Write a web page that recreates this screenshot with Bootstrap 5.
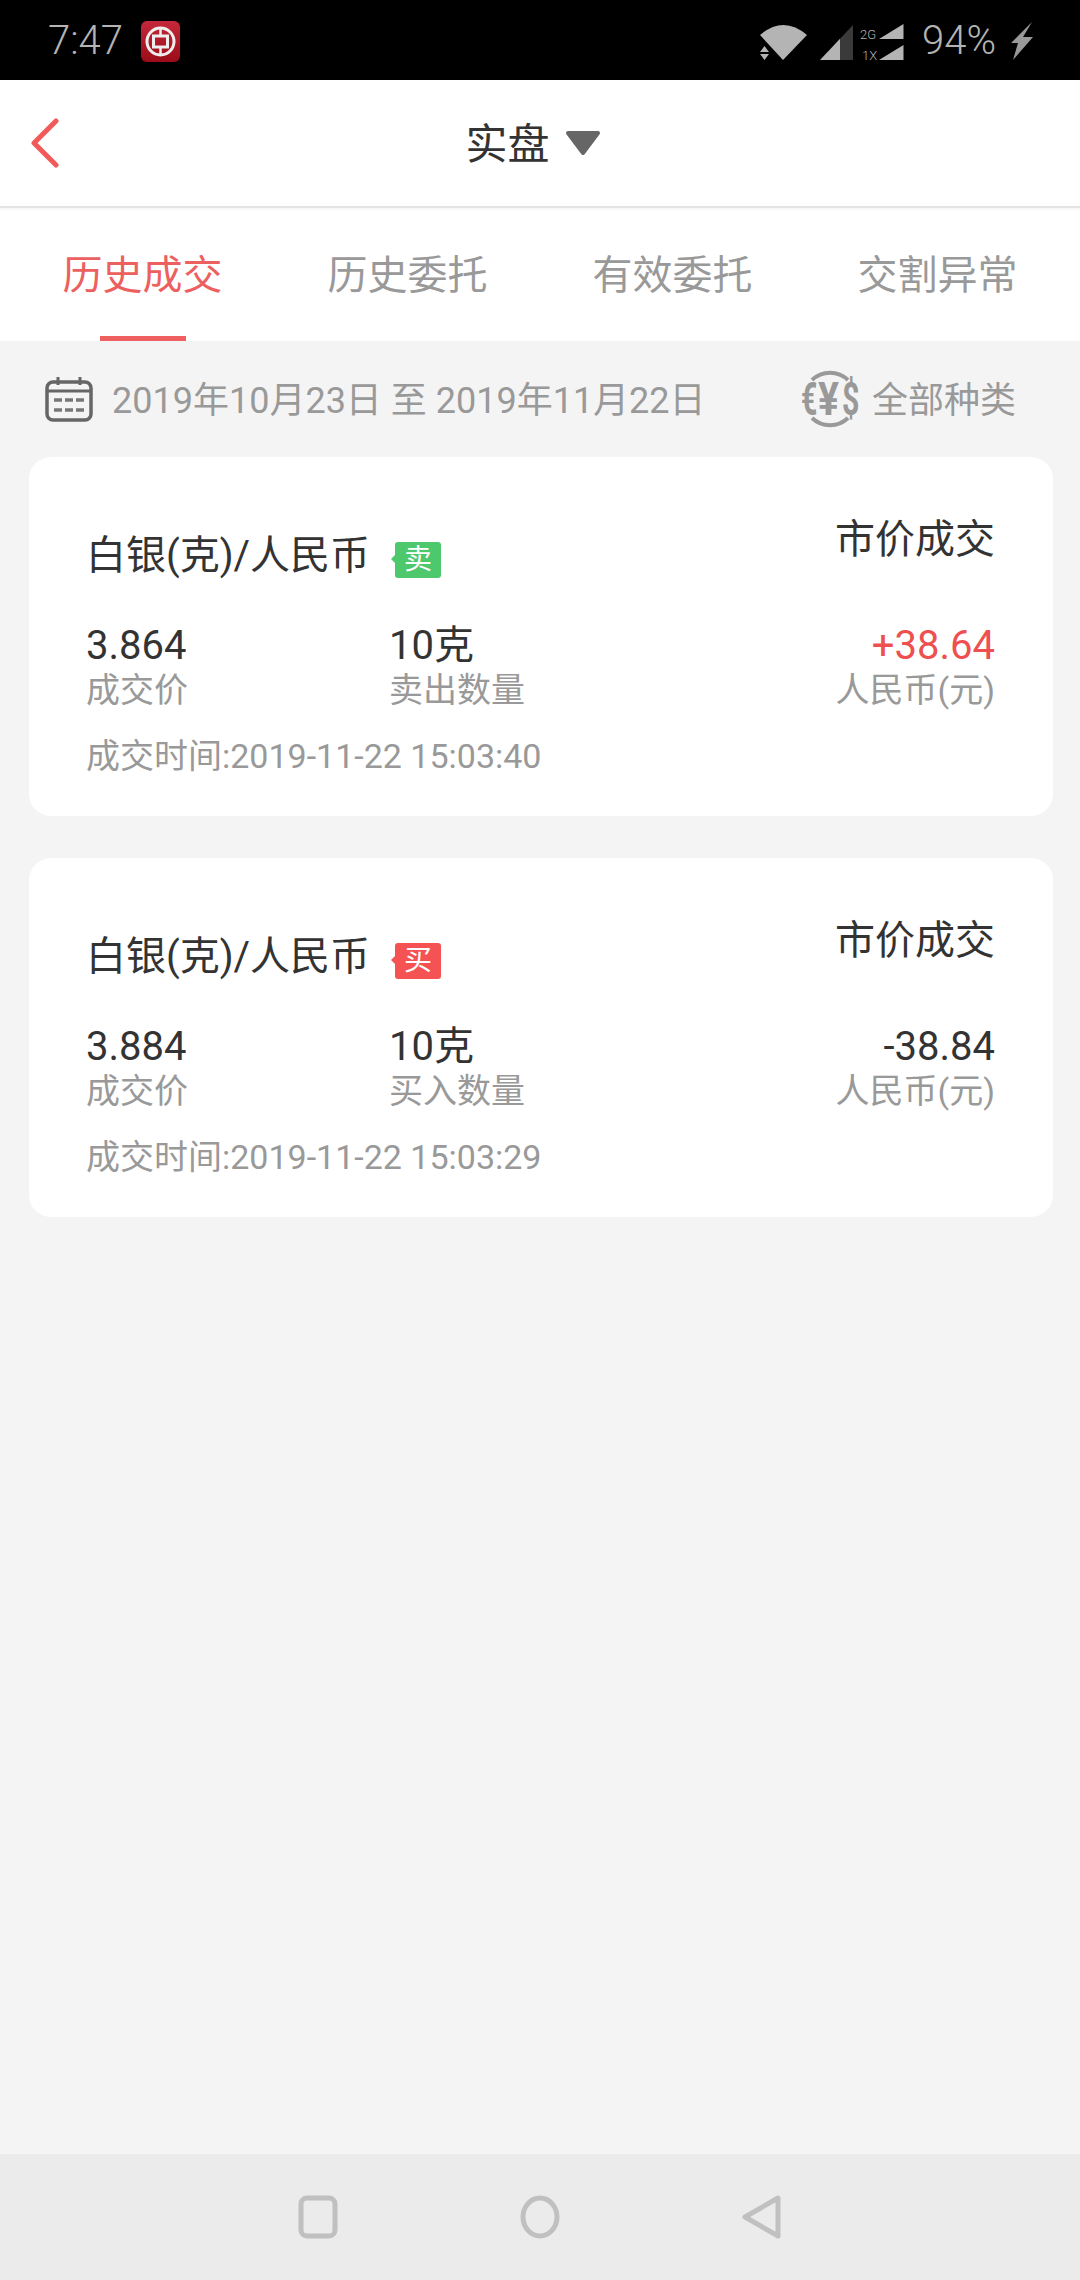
<!DOCTYPE html>
<html lang="zh-CN">
<head>
  <meta charset="utf-8">
  <meta name="viewport" content="width=device-width, initial-scale=1">
  <title>实盘</title>
  <link href="https://cdn.jsdelivr.net/npm/bootstrap@5.3.0/dist/css/bootstrap.min.css" rel="stylesheet">
  <style>
    body { width: 1080px; height: 2280px; background: #f4f4f4; font-family: Roboto, "Noto Sans CJK SC", sans-serif; color: #333; overflow: hidden; }
    .status-bar { height: 80px; background: #000; color: #b4b4b4; padding: 2px 47px 0 48px; font-size: 40px; font-weight: 300; line-height: 1; }
    .status-bar .logo-box { margin-left: 18px; }
    .status-bar .pct { margin-left: 18px; }
    .status-bar .bolt { margin-left: 15px; }
    .app-bar { height: 128px; background: #fff; border-bottom: 2px solid #e4e4e4; padding-left: 31px; }
    .app-title { font-size: 42px; left: 0; right: 0; top: 0; bottom: 0; color: #333; padding-right: 14px; gap: 15px; }
    .app-title span { padding-top: 3px; }
    .tab-strip { height: 133px; background: #fff; padding: 0 10px; border-top: 2px solid #f8f8f8; }
    .tab-item { width: 265px; font-size: 40px; color: #999; line-height: 1; padding-top: 46px; }
    .tab-item.on { color: #ec6060; }
    .tab-item.on::after { content: ""; position: absolute; left: 90px; bottom: 0; width: 86px; height: 5px; background: #ee5f5f; }
    .filter-bar { height: 116px; color: #999; font-size: 36px; padding: 0 64px 0 45px; }
    .filter-bar .date-txt { margin-left: 19px; padding-top: 3px; }
    .filter-bar .kind-txt { margin-left: 13px; padding-top: 3px; }
    .trade-list { padding: 0 27px 0 29px; gap: 42px; }
    .trade-box { height: 359px; background: #fff; border-radius: 22px; padding: 52px 58px 0 57px; }
    .trade-name { font-size: 40px; line-height: 50px; padding-top: 22px; gap: 25px; }
    .trade-kind { font-size: 40px; line-height: 50px; padding-top: 6px; }
    .side-tag { width: 46px; height: 36px; border-radius: 3px; color: #fff; font-size: 28px; line-height: 36px; text-align: center; margin-top: 11px; }
    .side-tag::before { content: ""; position: absolute; left: -4px; top: 13px; border: 4px solid transparent; border-left-width: 0; border-right-color: inherit; }
    .tag-sell { background: #4ec86c; border-color: #4ec86c; }
    .tag-buy { background: #f55353; border-color: #f55353; }
    .num-row { margin-top: 43px; }
    .num-col { width: 303px; }
    .num-val { font-size: 40px; line-height: 44px; }
    .num-lbl { font-size: 34px; line-height: 44px; color: #999; }
    .up-val { color: #ee5050; }
    .deal-time { font-size: 34px; line-height: 44px; color: #999; margin-top: 22px; }
    .nav-bottom { height: 126px; background: #ebebeb; gap: 182px; }
  </style>
</head>
<body class="d-flex flex-column">
  <div class="status-bar d-flex align-items-center">
    <span>7:47</span>
    <svg class="logo-box" width="39" height="41" viewBox="0 0 39 41">
      <defs><linearGradient id="logoRed" x1="0" y1="0" x2="0" y2="1"><stop offset="0" stop-color="#c4283a"/><stop offset="1" stop-color="#9c0c18"/></linearGradient></defs>
      <rect width="39" height="41" rx="6" fill="url(#logoRed)"/>
      <circle cx="19.500" cy="20.500" r="13.500" fill="none" stroke="#eee" stroke-width="3"/>
      <rect x="12.500" y="15" width="14" height="11" fill="none" stroke="#eee" stroke-width="3"/>
      <path d="M19.500 7v8M19.500 26v8" stroke="#eee" stroke-width="2.500"/>
    </svg>
    <div class="ms-auto d-flex align-items-center">
      <svg width="144" height="42" viewBox="0 0 144 42">
        <path d="M0 15Q23.500-5 47 15L23 40Z" fill="#b4b4b4"/>
        <path d="M4.500 26l-4.500 6h9zM4.500 40l-4.500-6h9z" fill="#b4b4b4"/>
        <path d="M60 40L80 18.800V40Z" fill="#b4b4b4"/>
        <path d="M80 18.800L93 5V40H80Z" fill="#3a3a3a"/>
        <text x="100" y="19" font-size="13" fill="#b4b4b4" font-family="Roboto">2G</text>
        <text x="102" y="40" font-size="13" fill="#b4b4b4" font-family="Roboto">1X</text>
        <path d="M119 19L143.500 4V19Z" fill="#b4b4b4"/>
        <path d="M119 40L143.500 25V40Z" fill="#b4b4b4"/>
      </svg>
      <span class="pct">94%</span>
      <svg class="bolt" width="22" height="38" viewBox="0 0 22 38">
        <path d="M21 0L12 15H22L2 38 7 21H0Z" fill="#999"/>
      </svg>
    </div>
  </div>

  <div class="app-bar position-relative d-flex align-items-center">
    <svg width="28" height="50" viewBox="0 0 28 50">
      <path d="M25 3L3 25 25 47" fill="none" stroke="#f25a5a" stroke-width="5" stroke-linecap="round" stroke-linejoin="round"/>
    </svg>
    <div class="app-title position-absolute d-flex align-items-center justify-content-center">
      <span>实盘</span>
      <svg width="36" height="26" viewBox="0 0 36 26">
        <path d="M3 3H33L18 23Z" fill="#666" stroke="#666" stroke-width="4" stroke-linejoin="round"/>
      </svg>
    </div>
  </div>

  <div class="tab-strip d-flex">
    <div class="tab-item on position-relative text-center">历史成交</div>
    <div class="tab-item text-center">历史委托</div>
    <div class="tab-item text-center">有效委托</div>
    <div class="tab-item text-center">交割异常</div>
  </div>

  <div class="filter-bar d-flex align-items-center">
    <svg width="48" height="48" viewBox="0 0 48 48">
      <rect x="2" y="7" width="44" height="38" rx="6" fill="none" stroke="#666" stroke-width="3.500"/>
      <path d="M2 16H46M13 2V10M35 2V10" stroke="#666" stroke-width="3" fill="none"/>
      <path d="M9 25H39M9 35H39" stroke="#777" stroke-width="3.500" stroke-dasharray="8 3" fill="none"/>
    </svg>
    <span class="date-txt">2019年10月23日 至 2019年11月22日</span>
    <svg class="ms-auto" width="58" height="60" viewBox="0 0 58 60">
      <path d="M11 11A26 26 0 0 1 47 11M11 49A26 26 0 0 0 47 49" fill="none" stroke="#999" stroke-width="4"/>
      <g fill="#999" font-family="Roboto" font-weight="700" font-size="46">
        <text transform="translate(0,46) scale(.62,1)">€</text>
        <text transform="translate(17,46) scale(.85,1)">¥</text>
        <text transform="translate(41,46) scale(.66,1)">$</text>
      </g>
    </svg>
    <span class="kind-txt">全部种类</span>
  </div>

  <div class="trade-list d-flex flex-column">
    <div class="trade-box">
      <div class="d-flex justify-content-between">
        <div class="trade-name d-flex">
          <span>白银(克)/人民币</span>
          <span class="side-tag tag-sell position-relative">卖</span>
        </div>
        <div class="trade-kind">市价成交</div>
      </div>
      <div class="num-row d-flex">
        <div class="num-col"><div class="num-val">3.864</div><div class="num-lbl">成交价</div></div>
        <div class="num-col"><div class="num-val">10克</div><div class="num-lbl">卖出数量</div></div>
        <div class="flex-grow-1 text-end"><div class="num-val up-val">+38.64</div><div class="num-lbl">人民币(元)</div></div>
      </div>
      <div class="deal-time">成交时间:2019-11-22 15:03:40</div>
    </div>
    <div class="trade-box">
      <div class="d-flex justify-content-between">
        <div class="trade-name d-flex">
          <span>白银(克)/人民币</span>
          <span class="side-tag tag-buy position-relative">买</span>
        </div>
        <div class="trade-kind">市价成交</div>
      </div>
      <div class="num-row d-flex">
        <div class="num-col"><div class="num-val">3.884</div><div class="num-lbl">成交价</div></div>
        <div class="num-col"><div class="num-val">10克</div><div class="num-lbl">买入数量</div></div>
        <div class="flex-grow-1 text-end"><div class="num-val">-38.84</div><div class="num-lbl">人民币(元)</div></div>
      </div>
      <div class="deal-time">成交时间:2019-11-22 15:03:29</div>
    </div>
  </div>

  <div class="nav-bottom mt-auto d-flex align-items-center justify-content-center">
    <svg width="40" height="44" viewBox="0 0 40 44">
      <rect x="3" y="3" width="34" height="38" rx="6" fill="none" stroke="#c0c0c0" stroke-width="5"/>
    </svg>
    <svg width="40" height="44" viewBox="0 0 40 44">
      <ellipse cx="20" cy="22" rx="17" ry="19" fill="none" stroke="#c0c0c0" stroke-width="5"/>
    </svg>
    <svg width="40" height="44" viewBox="0 0 40 44">
      <path d="M36 3V41L3 22Z" fill="none" stroke="#c0c0c0" stroke-width="5" stroke-linejoin="round"/>
    </svg>
  </div>

  <script src="https://cdn.jsdelivr.net/npm/bootstrap@5.3.0/dist/js/bootstrap.bundle.min.js"></script>
</body>
</html>
